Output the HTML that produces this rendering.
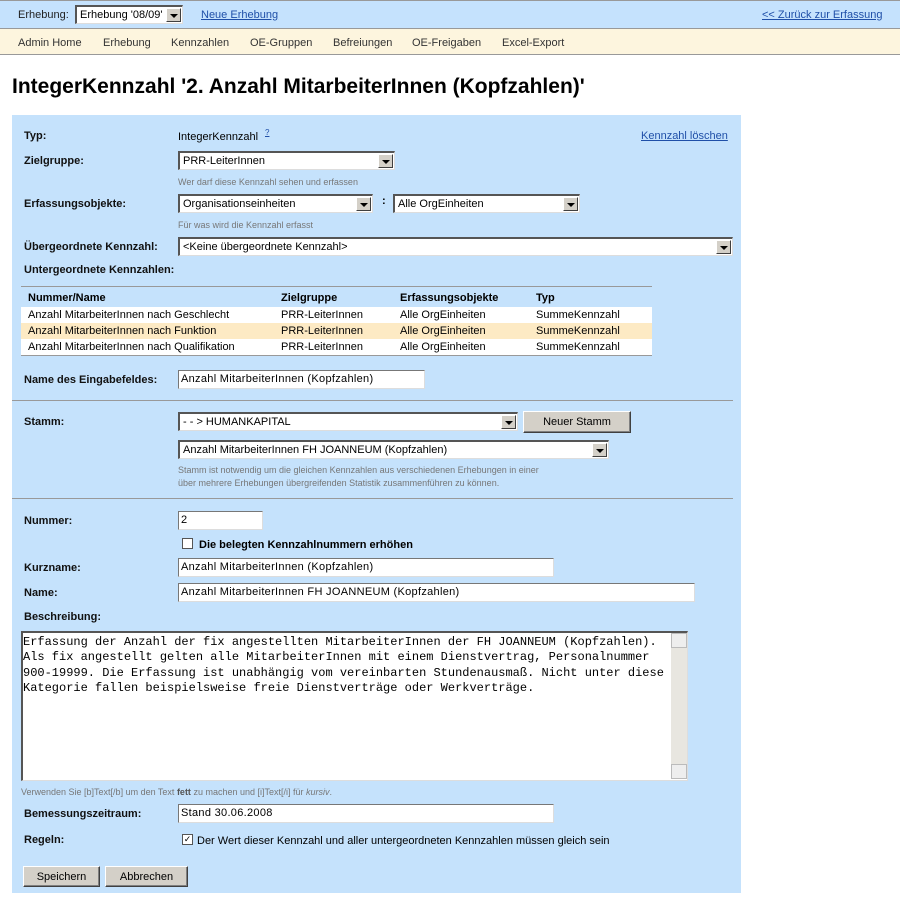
<!DOCTYPE html>
<html><head><meta charset="utf-8"><style>
*{box-sizing:border-box;margin:0;padding:0}
body{width:900px;height:910px;background:#fff;font-family:"Liberation Sans",sans-serif;font-size:11px;color:#000;position:relative;overflow:hidden}
.a{position:absolute;white-space:nowrap}
.top{position:absolute;left:0;top:0;width:900px;height:29px;background:#c5e2fd;border-top:1px solid #999;border-bottom:1px solid #999}
.nav{position:absolute;left:0;top:29px;width:900px;height:26px;background:#fdf5de;border-bottom:1px solid #999}
.nav span{position:absolute;top:8px;color:#333;font-size:11px}
a{color:#1f4fa8;text-decoration:underline}
.panel{position:absolute;left:12px;top:115px;width:729px;height:778px;background:#c5e2fc}
.lb{position:absolute;left:24px;font-weight:bold;font-size:11px;color:#111}
.hint{position:absolute;left:178px;font-size:9px;color:#777}
.sel,.inp{position:absolute;background:#fff;border-top:2px solid #555;border-left:2px solid #555;border-right:1px solid #ddd;border-bottom:1px solid #ddd;font-size:11px;padding:2px 0 0 3px;white-space:nowrap;overflow:hidden}
.inp{border-top:1px solid #777;border-left:1px solid #777;padding:2px 0 0 2px;letter-spacing:.3px}
.sel i{position:absolute;right:1px;top:1px;width:15px;height:14px;background:#d4d0c8;border:1px solid;border-color:#fff #404040 #404040 #fff}
.sel i:after{content:"";position:absolute;left:3px;top:5px;border-left:4px solid transparent;border-right:4px solid transparent;border-top:4px solid #000}
.btn{position:absolute;background:#d4d0c8;border:1px solid;border-color:#fff #404040 #404040 #fff;box-shadow:inset -1px -1px #808080;font-size:11px;text-align:center;padding-top:4px}
.hr{position:absolute;left:12px;width:721px;height:1px;background:#999}
.row{position:absolute;left:21px;width:631px;height:16px;font-size:11px}
.row span{position:absolute;top:2px}
.cb{position:absolute;width:11px;height:11px;background:#fff;border:1px solid #555}
</style></head><body>
<div class="top">
<span class="a" style="left:18px;top:8px;color:#222">Erhebung:</span>
<div class="sel" style="left:75px;top:4px;width:108px;height:19px">Erhebung '08/09'<i></i></div>
<a class="a" style="left:201px;top:8px">Neue Erhebung</a>
<a class="a" style="left:762px;top:8px">&lt;&lt; Zurück zur Erfassung</a>
</div>
<div class="nav">
<span style="left:18px">Admin Home</span><span style="left:103px">Erhebung</span><span style="left:171px">Kennzahlen</span><span style="left:250px">OE-Gruppen</span><span style="left:333px">Befreiungen</span><span style="left:412px">OE-Freigaben</span><span style="left:502px">Excel-Export</span>
</div>
<div class="a" style="left:12px;top:75px;font-size:21px;font-weight:bold;color:#000">IntegerKennzahl '2. Anzahl MitarbeiterInnen (Kopfzahlen)'</div>
<div class="panel"></div>
<div class="lb" style="top:130px">Typ:</div>
<span class="a" style="left:178px;top:131px">IntegerKennzahl</span>
<a class="a" style="left:265px;top:128px;font-size:8px">?</a>
<a class="a" style="left:641px;top:130px">Kennzahl löschen</a>
<div class="lb" style="top:155px">Zielgruppe:</div>
<div class="sel" style="left:178px;top:151px;width:217px;height:19px">PRR-LeiterInnen<i></i></div>
<div class="hint" style="top:177px">Wer darf diese Kennzahl sehen und erfassen</div>
<div class="lb" style="top:198px">Erfassungsobjekte:</div>
<div class="sel" style="left:178px;top:194px;width:195px;height:19px">Organisationseinheiten<i></i></div>
<span class="a" style="left:382px;top:195px;font-weight:bold">:</span>
<div class="sel" style="left:393px;top:194px;width:187px;height:19px">Alle OrgEinheiten<i></i></div>
<div class="hint" style="top:220px">Für was wird die Kennzahl erfasst</div>
<div class="lb" style="top:241px">Übergeordnete Kennzahl:</div>
<div class="sel" style="left:178px;top:237px;width:555px;height:19px">&lt;Keine übergeordnete Kennzahl&gt;<i></i></div>
<div class="lb" style="top:264px">Untergeordnete Kennzahlen:</div>
<div class="a" style="left:21px;top:286px;width:631px;height:1px;background:#999"></div>
<div class="row" style="top:290px;font-weight:bold"><span style="left:7px">Nummer/Name</span><span style="left:260px">Zielgruppe</span><span style="left:379px">Erfassungsobjekte</span><span style="left:515px">Typ</span></div>
<div class="row" style="top:307px;background:#fff"><span style="left:7px">Anzahl MitarbeiterInnen nach Geschlecht</span><span style="left:260px">PRR-LeiterInnen</span><span style="left:379px">Alle OrgEinheiten</span><span style="left:515px">SummeKennzahl</span></div>
<div class="row" style="top:323px;background:#fdeac4"><span style="left:7px">Anzahl MitarbeiterInnen nach Funktion</span><span style="left:260px">PRR-LeiterInnen</span><span style="left:379px">Alle OrgEinheiten</span><span style="left:515px">SummeKennzahl</span></div>
<div class="row" style="top:339px;background:#fff;border-bottom:1px solid #999;height:17px"><span style="left:7px">Anzahl MitarbeiterInnen nach Qualifikation</span><span style="left:260px">PRR-LeiterInnen</span><span style="left:379px">Alle OrgEinheiten</span><span style="left:515px">SummeKennzahl</span></div>
<div class="lb" style="top:374px">Name des Eingabefeldes:</div>
<div class="inp" style="left:178px;top:370px;width:247px;height:19px">Anzahl MitarbeiterInnen (Kopfzahlen)</div>
<div class="hr" style="top:400px"></div>
<div class="lb" style="top:416px">Stamm:</div>
<div class="sel" style="left:178px;top:412px;width:340px;height:19px">- - &gt; HUMANKAPITAL<i></i></div>
<div class="btn" style="left:523px;top:411px;width:108px;height:22px">Neuer Stamm</div>
<div class="sel" style="left:178px;top:440px;width:431px;height:19px">Anzahl MitarbeiterInnen FH JOANNEUM (Kopfzahlen)<i></i></div>
<div class="hint" style="top:465px">Stamm ist notwendig um die gleichen Kennzahlen aus verschiedenen Erhebungen in einer</div>
<div class="hint" style="top:478px">über mehrere Erhebungen übergreifenden Statistik zusammenführen zu können.</div>
<div class="hr" style="top:498px"></div>
<div class="lb" style="top:515px">Nummer:</div>
<div class="inp" style="left:178px;top:511px;width:85px;height:19px">2</div>
<div class="cb" style="left:182px;top:538px"></div>
<span class="a" style="left:199px;top:539px;font-weight:bold">Die belegten Kennzahlnummern erhöhen</span>
<div class="lb" style="top:562px">Kurzname:</div>
<div class="inp" style="left:178px;top:558px;width:376px;height:19px">Anzahl MitarbeiterInnen (Kopfzahlen)</div>
<div class="lb" style="top:587px">Name:</div>
<div class="inp" style="left:178px;top:583px;width:517px;height:19px">Anzahl MitarbeiterInnen FH JOANNEUM (Kopfzahlen)</div>
<div class="lb" style="top:611px">Beschreibung:</div>
<div class="a" style="left:21px;top:631px;width:667px;height:150px;background:#fff;border-top:2px solid #555;border-left:2px solid #555;border-right:1px solid #ddd;border-bottom:1px solid #ddd;font-family:'Liberation Mono',monospace;font-size:12px;line-height:15.3px;padding:2px 0 0 0;white-space:pre;overflow:hidden">Erfassung der Anzahl der fix angestellten MitarbeiterInnen der FH JOANNEUM (Kopfzahlen).
Als fix angestellt gelten alle MitarbeiterInnen mit einem Dienstvertrag, Personalnummer
900-19999. Die Erfassung ist unabhängig vom vereinbarten Stundenausmaß. Nicht unter diese
Kategorie fallen beispielsweise freie Dienstverträge oder Werkverträge.</div>
<div class="a" style="left:671px;top:633px;width:16px;height:146px;background:#e8e6e0"></div>
<div class="a" style="left:671px;top:633px;width:16px;height:15px;background:#eee;border:1px solid #bbb"></div>
<div class="a" style="left:671px;top:764px;width:16px;height:15px;background:#eee;border:1px solid #bbb"></div>
<div class="a" style="left:21px;top:787px;font-size:9px;color:#777">Verwenden Sie [b]Text[/b] um den Text <b style="color:#555">fett</b> zu machen und [i]Text[/i] für <i>kursiv</i>.</div>
<div class="lb" style="top:808px">Bemessungszeitraum:</div>
<div class="inp" style="left:178px;top:804px;width:376px;height:19px">Stand 30.06.2008</div>
<div class="lb" style="top:834px">Regeln:</div>
<div class="cb" style="left:182px;top:834px;font-size:9px;line-height:9px;text-align:center">✓</div>
<span class="a" style="left:197px;top:835px">Der Wert dieser Kennzahl und aller untergeordneten Kennzahlen müssen gleich sein</span>
<div class="btn" style="left:23px;top:866px;width:77px;height:21px">Speichern</div>
<div class="btn" style="left:105px;top:866px;width:83px;height:21px">Abbrechen</div>
</body></html>
